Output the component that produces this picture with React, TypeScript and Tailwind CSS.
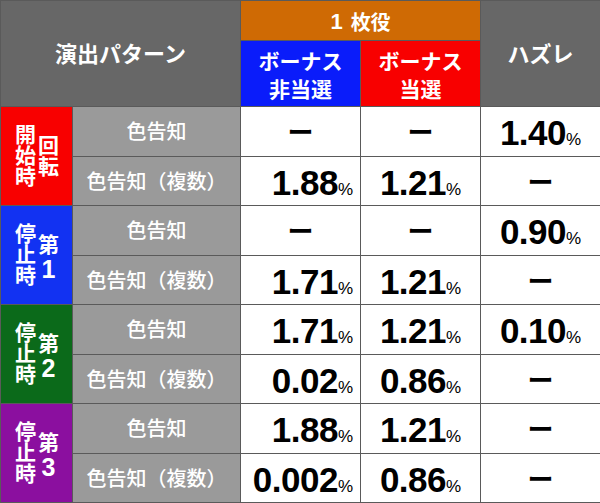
import React from "react";

function Label({ left, right, digit, bg }: { left: string; right: string; digit?: string; bg: string }) {
  return (
    <div className={`row-span-2 flex items-center justify-center ${bg}`}>
      <div className="flex gap-[2px] text-white font-bold text-[21px] leading-[21px] -mt-[2px]">
        <span className="[writing-mode:vertical-rl]">{left}</span>
        <div className="flex flex-col items-center pt-[11px]">
          <span className="[writing-mode:vertical-rl]">{right}</span>
          {digit && (
            <span className="text-[25px] leading-[22px] pl-[1px] mt-[3px] font-['Liberation_Sans',Arial,sans-serif]">
              {digit}
            </span>
          )}
        </div>
      </div>
    </div>
  );
}

function Pattern({ text }: { text: string }) {
  return (
    <div className="flex items-center justify-center bg-[#9a9a9a] text-white text-[20px] font-medium">
      {text}
    </div>
  );
}

function Val({ v, right }: { v: string; right?: boolean }) {
  if (v === "-") {
    return (
      <div className="flex items-center justify-center bg-white">
        <span className="text-[26px] font-bold text-black leading-none">ー</span>
      </div>
    );
  }
  return (
    <div className={`flex items-center bg-white ${right ? "justify-end pr-[7px]" : "justify-center"}`}>
      <span className="text-black leading-none whitespace-nowrap pt-[3px] font-['Liberation_Sans',Arial,sans-serif]">
        <span className="text-[35px] font-bold tracking-[-0.5px]">{v}</span>
        <span className="text-[17px] font-normal">%</span>
      </span>
    </div>
  );
}

const rows: [string, string, string, string][] = [
  ["色告知", "-", "-", "1.40"],
  ["色告知（複数）", "1.88", "1.21", "-"],
  ["色告知", "-", "-", "0.90"],
  ["色告知（複数）", "1.71", "1.21", "-"],
  ["色告知", "1.71", "1.21", "0.10"],
  ["色告知（複数）", "0.02", "0.86", "-"],
  ["色告知", "1.88", "1.21", "-"],
  ["色告知（複数）", "0.002", "0.86", "-"],
];

const labels: { left: string; right: string; digit?: string; bg: string }[] = [
  { left: "開始時", right: "回転", bg: "bg-[#f80000]" },
  { left: "停止時", right: "第", digit: "1", bg: "bg-[#1232f2]" },
  { left: "停止時", right: "第", digit: "2", bg: "bg-[#0b6a1a]" },
  { left: "停止時", right: "第", digit: "3", bg: "bg-[#8b0f9f]" },
];

export default function App() {
  const cells: React.ReactNode[] = [];
  rows.forEach((r, i) => {
    if (i % 2 === 0) {
      const l = labels[i / 2];
      cells.push(<Label key={`l${i}`} left={l.left} right={l.right} digit={l.digit} bg={l.bg} />);
    }
    cells.push(<Pattern key={`p${i}`} text={r[0]} />);
    cells.push(<Val key={`a${i}`} v={r[1]} right />);
    cells.push(<Val key={`b${i}`} v={r[2]} />);
    cells.push(<Val key={`c${i}`} v={r[3]} />);
  });

  return (
    <div className="w-[600px] h-[503px] bg-white overflow-hidden font-['Noto_Sans_CJK_JP','Noto_Sans',sans-serif]">
      <div className="w-[601px] h-[503px] grid grid-cols-[71px_167px_119px_119px_119px] grid-rows-[39px_65px_repeat(8,1fr)] gap-px p-px bg-[#5a5a5a]">
        <div className="col-span-2 row-span-2 flex items-center justify-center bg-[#676767] text-white font-bold text-[22px] pb-[2px]">
          演出パターン
        </div>
        <div className="col-span-2 flex items-center justify-center bg-[#cf6a04] text-white font-bold text-[20px] pt-[2px]">
          <span className="text-[22px] mr-[8px] font-['Liberation_Sans',Arial,sans-serif]">1</span>枚役
        </div>
        <div className="row-span-2 flex items-center justify-center bg-[#676767] text-white font-bold text-[22px] pb-[2px]">
          ハズレ
        </div>
        <div className="flex flex-col items-center justify-center bg-[#0a1cfa] text-white font-bold text-[21px] leading-[28px]">
          <span>ボーナス</span>
          <span>非当選</span>
        </div>
        <div className="flex flex-col items-center justify-center bg-[#f80000] text-white font-bold text-[21px] leading-[28px]">
          <span>ボーナス</span>
          <span>当選</span>
        </div>
        {cells}
      </div>
    </div>
  );
}
